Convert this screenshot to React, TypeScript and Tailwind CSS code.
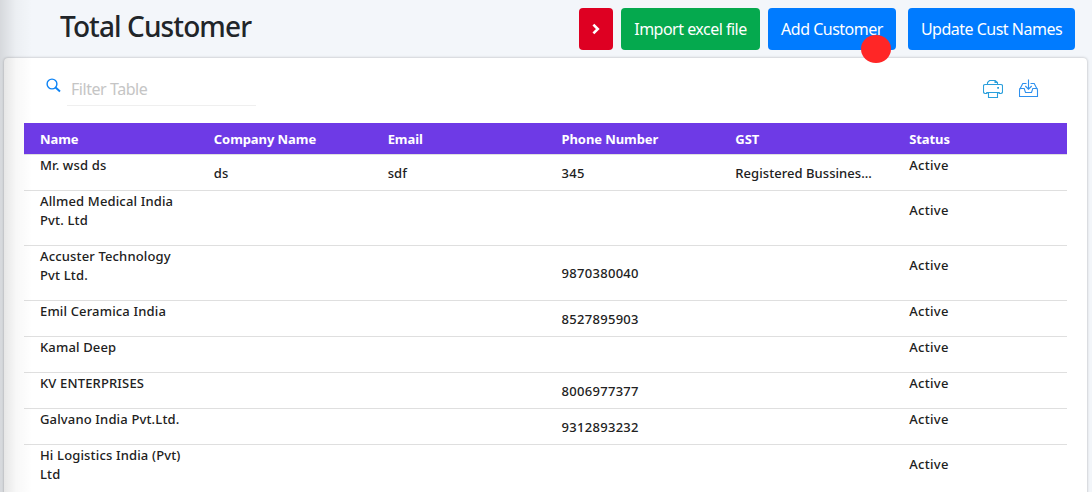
import React from "react";

type Customer = {
  name: string[];
  company?: string;
  email?: string;
  phone?: string;
  gst?: string;
};

const customers: Customer[] = [
  { name: ["Mr. wsd ds"], company: "ds", email: "sdf", phone: "345", gst: "Registered Bussines..." },
  { name: ["Allmed Medical India", "Pvt. Ltd"] },
  { name: ["Accuster Technology", "Pvt Ltd."], phone: "9870380040" },
  { name: ["Emil Ceramica India"], phone: "8527895903" },
  { name: ["Kamal Deep"] },
  { name: ["KV ENTERPRISES"], phone: "8006977377" },
  { name: ["Galvano India Pvt.Ltd."], phone: "9312893232" },
  { name: ["Hi Logistics India (Pvt)", "Ltd"] },
];

const headers = ["Name", "Company Name", "Email", "Phone Number", "GST", "Status"];

function ChevronIcon() {
  return (
    <svg className="h-[12px] w-[8px]" viewBox="0 0 8 12" fill="none" stroke="#fff" strokeWidth="2.6">
      <path d="M1.4 1.6 5.8 6 1.4 10.4" />
    </svg>
  );
}

function SearchIcon() {
  return (
    <svg className="mt-[20px] h-[15px] w-[15px] shrink-0" viewBox="0 0 15 15" fill="none" stroke="#0d83f5">
      <circle cx="6" cy="6" r="4.9" strokeWidth="1.4" />
      <path d="M9.6 9.6 14 13.4" strokeWidth="2" />
    </svg>
  );
}

function PrinterIcon() {
  return (
    <svg className="h-[20px] w-[20px]" viewBox="0 0 20 20" fill="none" stroke="#2a9fdc" strokeWidth="1.1">
      <path d="M4.5 14.5H2.3Q.5 14.5.5 12.8V6.7Q.5 5.5 2.3 5.5H17.7Q19.5 5.5 19.5 6.7V12.8Q19.5 14.5 17.7 14.5H15.5" />
      <path d="M4.5 5.5V3.5L6.5 1.5H12.2L14.5 3.5V5.5M12 1.5V3.5H14.5" />
      <path d="M3.2 13.5H16.8M5.5 13.5V18.5H14.5V13.5" />
      <path d="M14.2 8.8H16" strokeWidth="1.8" />
    </svg>
  );
}

function DownloadIcon() {
  return (
    <svg className="h-[20px] w-[20px]" viewBox="0 0 20 20" fill="none" stroke="#2e90ee" strokeWidth="1.1">
      <path d="M7.5 4.5H3.8L.5 10.8V17.5H18.5V10.8L15.2 4.5H11.5" />
      <path d="M.5 9.5H5.2L6.5 13.5H12.5L13.8 9.5H18.5" />
      <path d="M9.5 .5V10M6.3 7 9.5 10.2 12.7 7" />
    </svg>
  );
}

function Row({ c }: { c: Customer }) {
  const tall = c.name.length > 1;
  const middle = tall ? "self-center pl-4" : "self-center pt-[2px] pl-4 whitespace-nowrap";
  return (
    <div
      className={`grid shrink-0 grid-cols-6 border-b border-[#dfdfdf] text-[13px] leading-[19px] font-medium tracking-[0.15px] text-[#212121] ${
        tall ? "h-[55px]" : "h-[36px]"
      }`}
    >
      <div className="pt-px pl-4 whitespace-nowrap">
        {c.name.map((line) => (
          <div key={line}>{line}</div>
        ))}
      </div>
      <div className={middle}>{c.company}</div>
      <div className={middle}>{c.email}</div>
      <div className={`${middle} tracking-[0.3px]`}>{c.phone}</div>
      <div className={`${middle} tracking-[0.05px]`}>{c.gst}</div>
      <div className={`${tall ? "pt-[10px]" : "pt-px"} pl-4 tracking-[0.3px]`}>Active</div>
    </div>
  );
}

export default function App() {
  return (
    <div className="relative flex h-[492px] w-[1092px] flex-col overflow-hidden bg-[#f3f6fa] font-['Noto_Sans',sans-serif]">
      <header className="flex h-[58px] shrink-0 items-start pt-2 pr-[17px] pl-[60px]">
        <h1 className="text-[28px] leading-[37px] font-medium tracking-[-0.9px] whitespace-nowrap text-[#212529]">
          Total Customer
        </h1>
        <div className="ml-auto flex text-[16px] tracking-[-0.5px] whitespace-nowrap text-white">
          <button className="flex h-[42px] w-[34px] items-center justify-center rounded bg-[#de0022]">
            <ChevronIcon />
          </button>
          <button className="ml-2 h-[42px] w-[139px] rounded bg-[#05a94e]">Import excel file</button>
          <button className="relative ml-2 h-[42px] w-[128px] rounded bg-[#007bff]">
            Add Customer
            <span className="absolute top-[27px] left-[93px] z-10 h-[28px] w-[30px] rounded-[50%] bg-[#ff2626]" />
          </button>
          <button className="ml-3 h-[42px] w-[167px] rounded bg-[#007bff]">Update Cust Names</button>
        </div>
      </header>
      <main className="ml-1 flex h-[450px] w-[1083px] shrink-0 flex-col rounded-[4px] bg-white px-5 shadow-[0_0_3px_rgba(0,0,0,0.28)]">
        <div className="flex h-[65px] shrink-0 items-start pl-[22px]">
          <SearchIcon />
          <div className="ml-[6px] h-[48px] w-[189px] border-b border-[#efefef] pt-[19px] pl-[4px] text-[16px] leading-[24px] tracking-[-0.45px] text-[#c5c5c5]">
            Filter Table
          </div>
          <div className="mt-[21px] mr-[28px] ml-auto flex gap-4">
            <PrinterIcon />
            <DownloadIcon />
          </div>
        </div>
        <div className="grid h-[32px] shrink-0 grid-cols-6 border-b border-[#dfdfdf] bg-[#6e3ae6] bg-clip-padding pt-px text-[13px] leading-[31px] font-bold tracking-[-0.08px] text-white">
          {headers.map((h) => (
            <div key={h} className="pl-4 whitespace-nowrap">
              {h}
            </div>
          ))}
        </div>
        {customers.map((c) => (
          <Row key={c.name[0]} c={c} />
        ))}
      </main>
      <div className="pointer-events-none absolute inset-y-0 left-0 w-[32px] bg-linear-to-r from-black/12 via-black/3 to-transparent" />
    </div>
  );
}
